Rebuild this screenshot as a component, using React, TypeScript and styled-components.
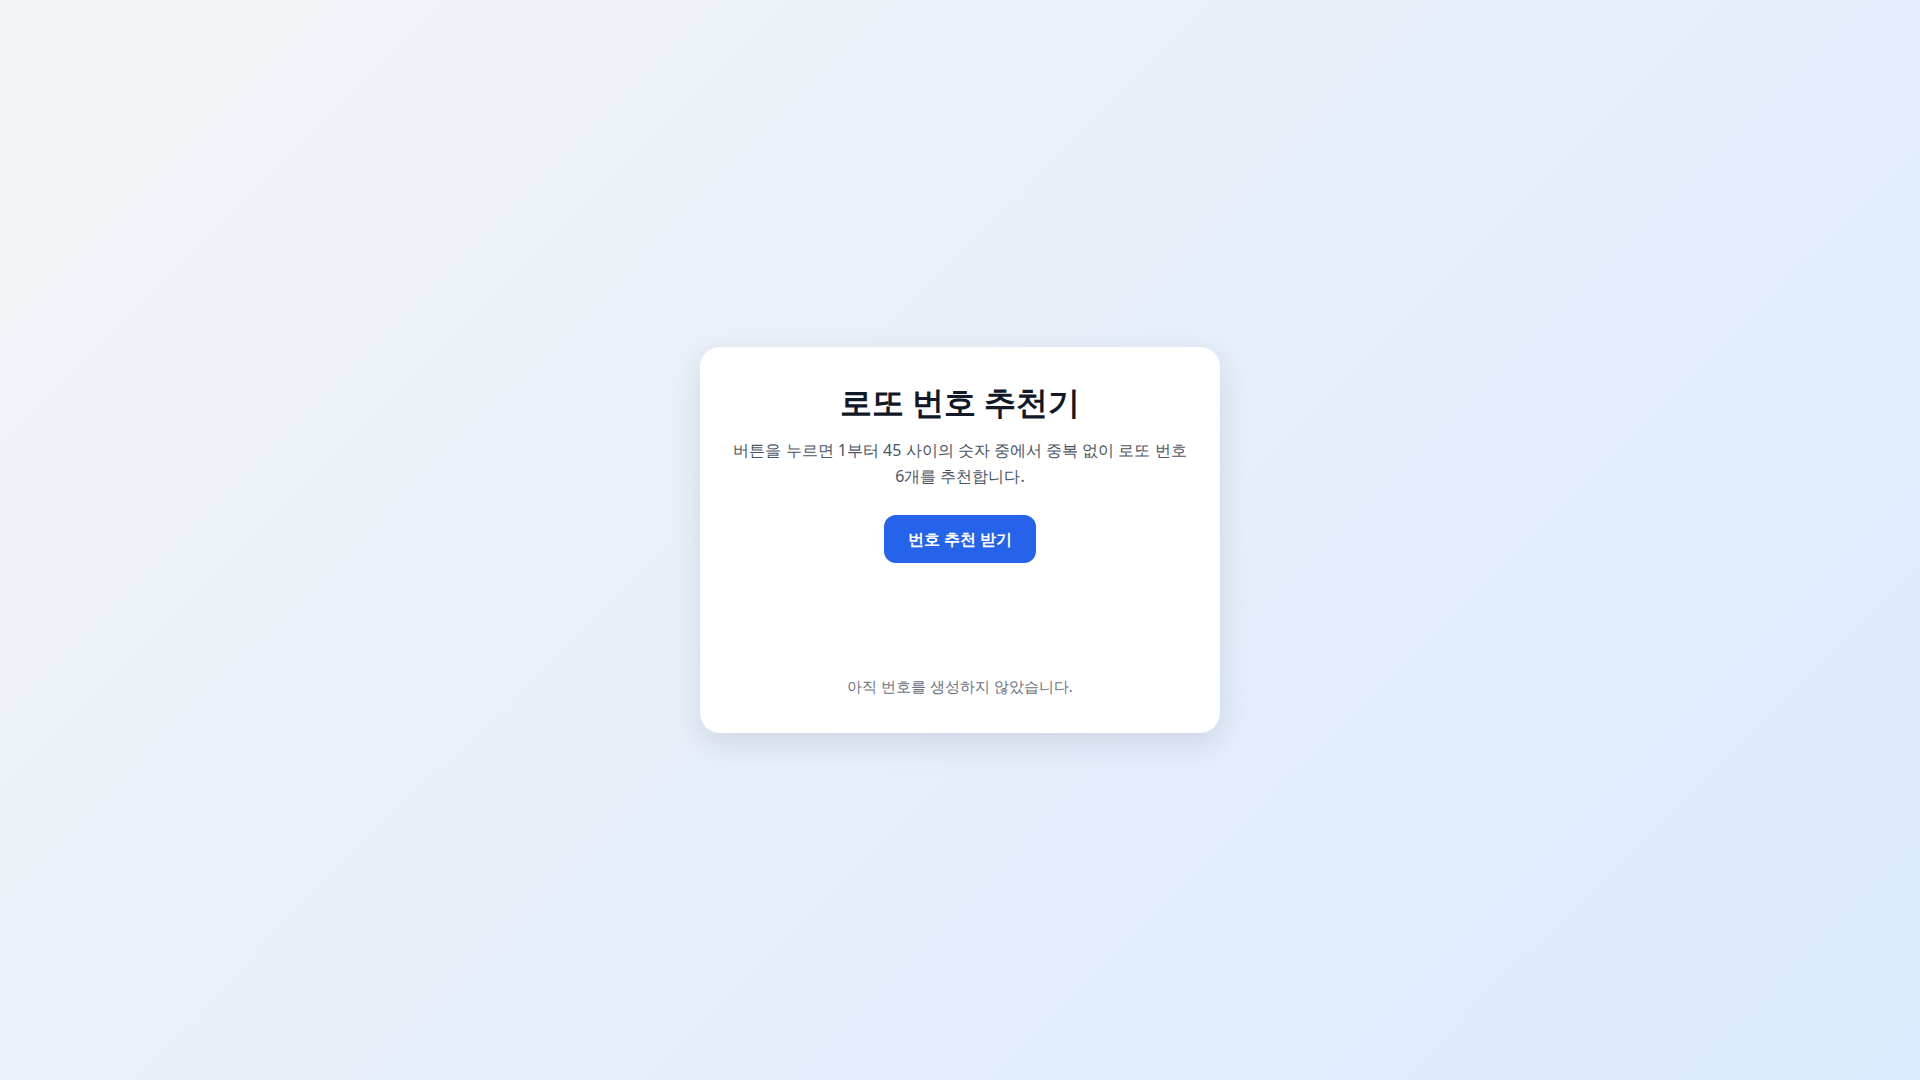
import React from "react";
import styled, { createGlobalStyle } from "styled-components";

const GlobalStyle = createGlobalStyle`
  * { box-sizing: border-box; }
  html, body { margin: 0; padding: 0; }
  body {
    font-family: system-ui, -apple-system, "Segoe UI", sans-serif;
  }
`;

const Page = styled.div`
  min-height: 100vh;
  display: flex;
  align-items: center;
  justify-content: center;
  background: linear-gradient(135deg, #f3f4f6 0%, #dbeafe 100%);
`;

const Card = styled.main`
  width: 520px;
  background: #ffffff;
  border-radius: 20px;
  padding: 36px 32px 36px;
  box-shadow: 0 10px 30px rgba(30, 41, 59, 0.12);
  display: flex;
  flex-direction: column;
  align-items: center;
  text-align: center;
`;

const Title = styled.h1`
  margin: 0;
  font-size: 32px;
  line-height: 38px;
  font-weight: 700;
  color: #111827;
`;

const Description = styled.p`
  margin: 17px 0 0;
  font-size: 16px;
  line-height: 1.6;
  color: #4b5563;
`;

const Button = styled.button`
  margin-top: 26px;
  height: 48px;
  padding: 0 24px;
  border: none;
  border-radius: 12px;
  background: #2563eb;
  color: #ffffff;
  font-family: inherit;
  font-size: 16px;
  font-weight: 700;
  cursor: pointer;
`;

const Balls = styled.div`
  min-height: 113px;
  width: 100%;
`;

const EmptyText = styled.p`
  margin: 0;
  font-size: 15px;
  line-height: 21px;
  color: #6b7280;
`;

export default function App() {
  return (
    <>
      <GlobalStyle />
      <Page>
        <Card>
          <Title>로또 번호 추천기</Title>
          <Description>
            버튼을 누르면 1부터 45 사이의 숫자 중에서 중복 없이 로또 번호 6개를 추천합니다.
          </Description>
          <Button type="button">번호 추천 받기</Button>
          <Balls />
          <EmptyText>아직 번호를 생성하지 않았습니다.</EmptyText>
        </Card>
      </Page>
    </>
  );
}
